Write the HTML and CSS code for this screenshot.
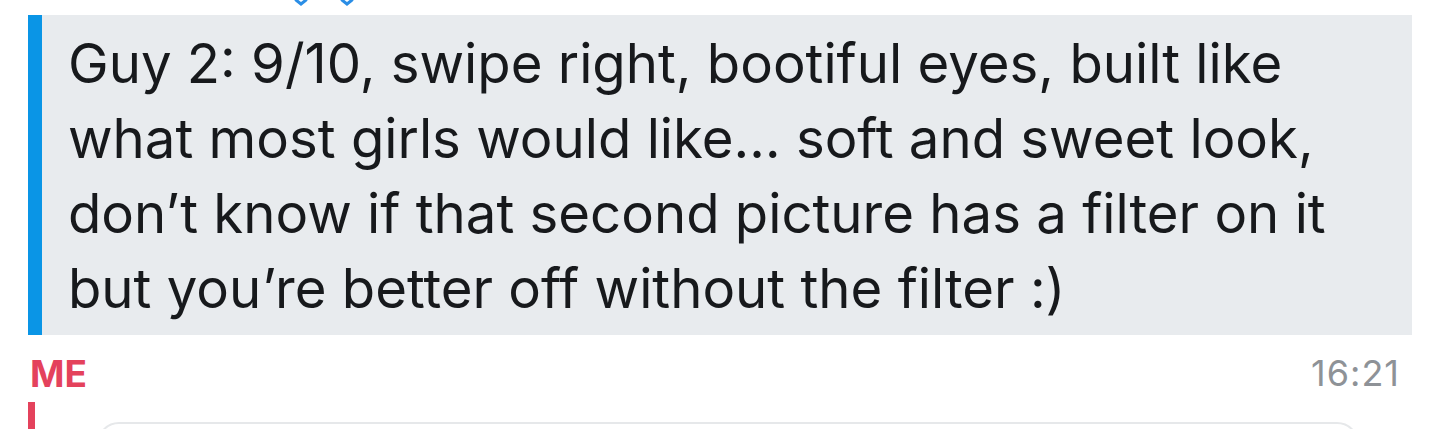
FILE: index.html
```html
<!DOCTYPE html>
<html>
<head>
<meta charset="utf-8">
<link rel="stylesheet" href="styles.css">
</head>
<body>
<div class="top">
  <span class="ticks">
    <svg class="tick" width="14" height="6" viewBox="0 0 14 6"><path d="M2 0 L7 4 L12 0" fill="none" stroke="#2b8ee6" stroke-width="3" stroke-linecap="round"/></svg>
    <svg class="tick" width="14" height="6" viewBox="0 0 14 6"><path d="M2 0 L7 4 L12 0" fill="none" stroke="#2b8ee6" stroke-width="3" stroke-linecap="round"/></svg>
  </span>
</div>
<div class="quote">
  <div class="bar"></div>
  <p class="text">Guy 2: 9/10, swipe right, bootiful eyes, built like<br>what most girls would like… soft and sweet look,<br>don’t know if that second picture has a filter on it<br>but you’re better off without the filter :)</p>
</div>
<div class="meta">
  <span class="me">ME</span>
  <span class="time">16:21</span>
</div>
<div class="compose">
  <div class="cursor"></div>
  <div class="input"></div>
</div>
</body>
</html>
```
FILE: styles.css
```css
html, body { margin: 0; padding: 0; background: #fff; }
body { width: 1440px; height: 429px; overflow: hidden; font-family: Inter, "Open Sans", sans-serif; }
.top { height: 15px; display: flex; align-items: flex-start; padding-left: 294px; }
.ticks { display: flex; gap: 32px; }
.tick { display: block; }
.quote { display: flex; margin: 0 28px; background: #e8ebee; height: 320px; overflow: hidden; }
.bar { width: 14px; background: #0a95e6; flex: none; }
.text { margin: 0; padding: 11px 0 0 26px; font-size: 54.5px; line-height: 75px; color: #17191c; white-space: nowrap; }
.meta { display: flex; justify-content: space-between; align-items: center; padding: 18px 40px 0 30px; height: 40px; }
.me { color: #e4425c; font-weight: 700; font-size: 37px; }
.time { color: #8e9297; font-size: 36px; letter-spacing: 1px; }
.compose { display: flex; align-items: flex-start; padding: 9px 0 0 28px; height: 27px; overflow: hidden; }
.cursor { width: 7px; height: 27px; background: #e4425c; flex: none; }
.input { margin: 20px 0 0 62px; width: 1258px; height: 40px; border: 2px solid #e6e8ea; border-radius: 22px; flex: none; }
```
